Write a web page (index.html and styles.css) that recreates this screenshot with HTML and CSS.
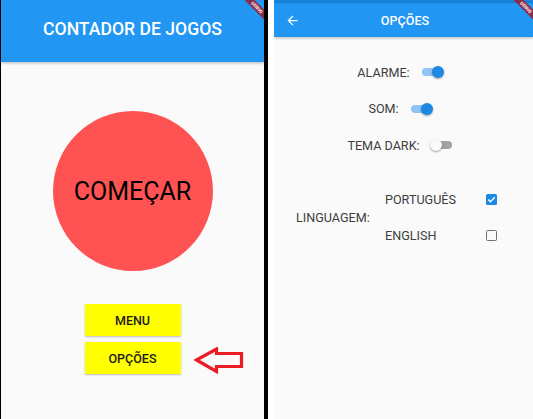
FILE: index.html
```html
<!DOCTYPE html>
<html lang="pt">
<head>
<meta charset="utf-8">
<title>Contador de Jogos</title>
<link rel="stylesheet" href="styles.css">
</head>
<body>
<div class="screen">
  <section class="phone phone-main">
    <header class="appbar appbar-main"><h1 class="appbar-title">CONTADOR DE JOGOS</h1></header>
    <div class="banner"><div class="banner-strip">DEBUG</div></div>
    <main class="main-body">
      <button class="start">COMEÇAR</button>
      <div class="actions">
        <button class="action">MENU</button>
        <button class="action">OPÇÕES</button>
      </div>
    </main>
    <svg class="annot-arrow" width="50" height="27" viewBox="0 0 50 27">
      <polygon points="2.5,13 22.5,2 22.5,6.5 47.5,6.5 47.5,19.5 22.5,19.5 22.5,24.5" fill="none" stroke="#ec1c24" stroke-width="3.2" stroke-linejoin="miter"/>
    </svg>
  </section>
  <div class="divider"></div>
  <div class="gutter"></div>
  <section class="phone phone-options">
    <div class="statusbar"></div>
    <header class="appbar appbar-options">
      <span class="back">
        <svg width="15" height="15" viewBox="0 0 24 24"><path d="M20 11H7.83l5.59-5.59L12 4l-8 8 8 8 1.41-1.41L7.83 13H20v-2z" fill="#fff"/></svg>
      </span>
      <h2 class="options-title">OPÇÕES</h2>
      <span></span>
    </header>
    <div class="banner"><div class="banner-strip">DEBUG</div></div>
    <main class="options-body">
      <div class="opt-row"><span class="opt-label">ALARME:</span><span class="switch"><span class="track on"></span></span></div>
      <div class="opt-row"><span class="opt-label">SOM:</span><span class="switch"><span class="track on"></span></span></div>
      <div class="opt-row"><span class="opt-label">TEMA DARK:</span><span class="switch"><span class="track off"></span></span></div>
      <div class="lang">
        <span class="opt-label lang-label">LINGUAGEM:</span>
        <div class="lang-options">
          <div class="lang-row"><span class="opt-label lang-name">PORTUGUÊS</span><span class="check checked"><svg width="11" height="11" viewBox="0 0 11 11"><path d="M2.3 5.6 L4.4 7.7 L8.8 3.2" fill="none" stroke="#fff" stroke-width="1.4"/></svg></span></div>
          <div class="lang-row"><span class="opt-label lang-name">ENGLISH</span><span class="check"></span></div>
        </div>
      </div>
    </main>
  </section>
</div>
</body>
</html>
```
FILE: styles.css
```css
* { box-sizing: border-box; }
html, body { margin: 0; padding: 0; }
body {
  background: #000;
  width: 533px;
  height: 419px;
  overflow: hidden;
  font-family: Roboto, "Liberation Sans", sans-serif;
}
.screen {
  display: flex;
  height: 419px;
  padding-left: 1px;
}
.phone {
  position: relative;
  background: #fafafa;
  height: 419px;
  overflow: hidden;
}
.phone-main { width: 263px; }
.divider { width: 4px; background: #000; }
.gutter { width: 6px; background: #fff; }
.phone-options { flex: 1; }

.appbar {
  background: #2196f3;
  color: #fff;
  box-shadow: 0 1px 3px rgba(0,0,0,0.28);
  position: relative;
  z-index: 1;
}
.appbar-main {
  height: 62px;
  display: flex;
  align-items: center;
  justify-content: center;
  padding-bottom: 4px;
}
.appbar-title {
  margin: 0;
  font-size: 17.6px;
  font-weight: 500;
  letter-spacing: 0;
}

.banner {
  position: absolute;
  top: 0;
  right: 0;
  width: 30px;
  height: 30px;
  overflow: hidden;
  z-index: 3;
}
.banner-strip {
  position: absolute;
  left: -7.5px;
  top: 3.8px;
  width: 60px;
  height: 7px;
  background: #8b2b45;
  color: #fff;
  font-size: 4.5px;
  font-weight: 700;
  line-height: 7px;
  text-align: center;
  transform: rotate(45deg);
}

.main-body {
  display: flex;
  flex-direction: column;
  align-items: center;
  padding-top: 49px;
}
.start {
  width: 160px;
  height: 160px;
  border-radius: 50%;
  border: none;
  background: #ff5353;
  color: #000;
  font-family: Roboto, "Liberation Sans", sans-serif;
  font-size: 25px;
  padding: 0;
}
.actions {
  display: flex;
  flex-direction: column;
  gap: 6px;
  margin-top: 33px;
}
.action {
  width: 96px;
  height: 32px;
  border: none;
  border-radius: 1px;
  background: #ffff00;
  color: #1a1a1a;
  font-family: Roboto, "Liberation Sans", sans-serif;
  font-size: 12.5px;
  font-weight: 500;
  box-shadow: 0 1px 2px rgba(0,0,0,0.25);
  padding: 0;
}
.annot-arrow {
  position: absolute;
  left: 193px;
  top: 347px;
}

.statusbar { height: 3px; background: #1a84d8; }
.appbar-options {
  height: 34px;
  display: grid;
  grid-template-columns: 34px 1fr 31px;
  align-items: center;
}
.back { display: flex; padding-left: 10.5px; }
.back svg { display: block; }
.options-title {
  margin: 0;
  text-align: center;
  font-size: 12.6px;
  font-weight: 500;
}

.options-body {
  padding-top: 17px;
  color: #3a3a3a;
}
.opt-label {
  font-size: 12.6px;
  color: #3d3d3d;
}
.opt-row {
  height: 36.5px;
  display: flex;
  align-items: center;
  justify-content: center;
  gap: 5px;
}
.switch {
  width: 35px;
  height: 20px;
  display: flex;
  align-items: center;
  justify-content: center;
}
.track {
  position: relative;
  width: 20px;
  height: 8px;
  border-radius: 4px;
}
.track::after {
  content: "";
  position: absolute;
  top: -2px;
  width: 12px;
  height: 12px;
  border-radius: 50%;
  box-shadow: 0 1px 2px rgba(0,0,0,0.35);
}
.track.on { background: #8fc4f6; }
.track.on::after { right: -2px; background: #1e88e5; }
.track.off { background: #a3a3a3; }
.track.off::after { left: -2px; background: #fafafa; }

.lang {
  display: flex;
  align-items: center;
  margin-top: 17.5px;
  padding-left: 22px;
}
.lang-label { width: 89px; }
.lang-options { display: flex; flex-direction: column; }
.lang-row {
  height: 36px;
  display: flex;
  align-items: center;
}
.lang-name { width: 101px; }
.check {
  width: 11px;
  height: 11px;
  border-radius: 1.5px;
  border: 1.6px solid #707070;
  display: block;
}
.check.checked {
  border: none;
  background: #1e88e5;
}
.check.checked svg { display: block; }
```
